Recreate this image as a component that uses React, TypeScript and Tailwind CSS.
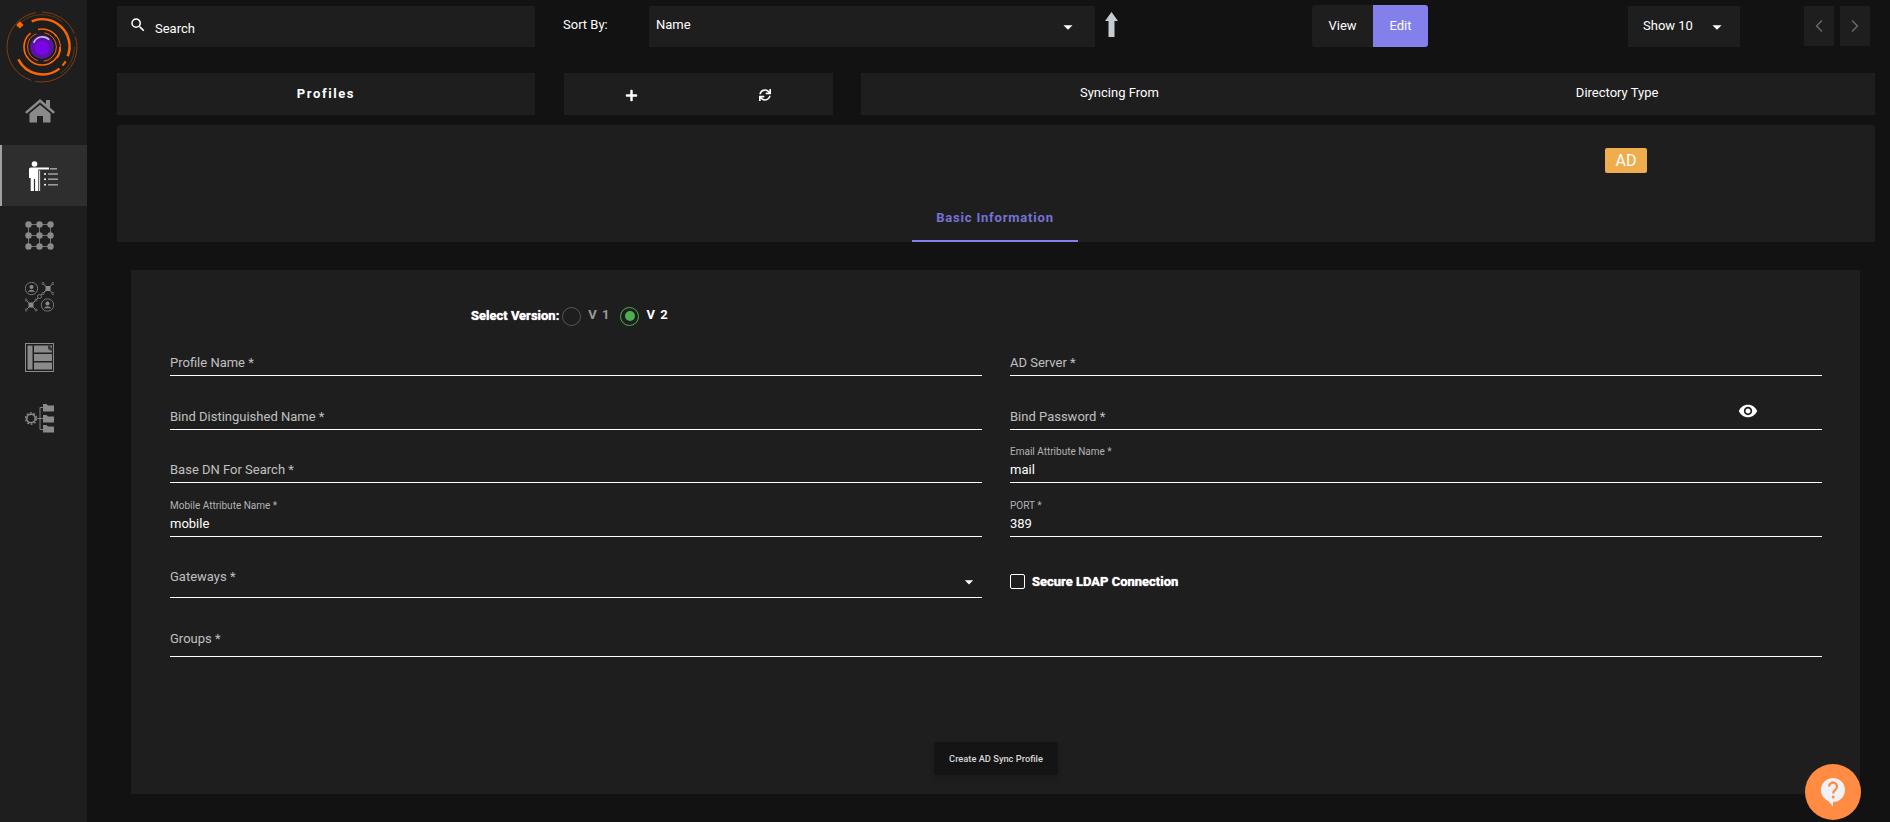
import React from "react";
import { MdSearch, MdArrowDropDown, MdVisibility } from "react-icons/md";
import { FaPlus, FaSync } from "react-icons/fa";
import { FiChevronLeft, FiChevronRight } from "react-icons/fi";

const Logo = () => (
  <svg viewBox="0 0 70 70" className="w-[72px] h-[72px]" fill="none" stroke="#ff6600">
    <circle cx="35" cy="35" r="34" strokeWidth="0.6" strokeDasharray="60 4 90 6 40 3" opacity="0.7" />
    <circle cx="35" cy="35" r="31.5" strokeWidth="0.5" strokeDasharray="30 90 50 30" opacity="0.6" />
    <path d="M25 10 A26.5 26.5 0 0 1 60 44" strokeWidth="2.4" />
    <path d="M52 56 A26.5 26.5 0 0 1 12 47" strokeWidth="2.4" />
    <path d="M58 49 A26.5 26.5 0 0 1 55 53" strokeWidth="2" />
    <circle cx="35" cy="35" r="17.5" strokeWidth="1.6" strokeDasharray="70 8 20 12" />
    <circle cx="35" cy="35" r="14" strokeWidth="0.9" strokeDasharray="20 6 34 8" />
    <path d="M47 22 A19 19 0 0 1 50 46" strokeWidth="1" />
    <rect x="11" y="11" width="5" height="5" fill="#ff6600" stroke="none" transform="rotate(45 13.5 13.5)" />
    <circle cx="35" cy="35" r="11.5" fill="#5a12a8" stroke="none" />
    <circle cx="35" cy="36" r="7" fill="#7a06e8" stroke="none" />
    <path d="M27 31 A9 9 0 0 1 42 28" stroke="#c9b8e8" strokeWidth="1.6" />
  </svg>
);

const HomeIcon = () => (
  <svg viewBox="0 0 30 26" className="w-[30px] h-[26px] -mt-1" fill="#8a8a8a">
    <path d="M15 0 L21 5 V1 H25 V8.5 L30 13 L28.4 14.8 L15 3.6 L1.6 14.8 L0 13 Z" />
    <path d="M4.5 14.5 L15 5.8 L25.5 14.5 V23.5 H18 V17 H12 V23.5 H4.5 Z" />
  </svg>
);

const PersonIcon = () => (
  <svg viewBox="0 0 30 30" className="w-[30px] h-[30px]">
    <g fill="#ffffff">
      <circle cx="5.5" cy="3" r="2.8" />
      <path d="M0 8 Q0 6.5 2 6.5 H20 V8.6 H9.3 V30 H6.1 V18 H4.9 V30 H1.7 V17 H0 Z" />
      <rect x="10.2" y="9.5" width="0.9" height="20.5" />
    </g>
    <g fill="#9a9a9a">
      <rect x="21" y="7" width="7" height="1.6" />
      <rect x="19" y="12.2" width="10" height="1.6" />
      <rect x="19" y="17.4" width="10" height="1.6" />
      <rect x="19" y="23" width="10" height="1.6" />
    </g>
    <g fill="#ffffff">
      <circle cx="16" cy="13" r="1" />
      <circle cx="16" cy="18.2" r="1" />
      <circle cx="16" cy="23.8" r="1" />
    </g>
  </svg>
);

const GridIcon = () => {
  const spots = [3.5, 14.5, 25.5];
  return (
    <svg viewBox="0 0 29 29" className="w-[29px] h-[29px]" fill="#8a8a8a" stroke="#8a8a8a">
      {spots.map((y) => (
        <line key={`h${y}`} x1="3.5" x2="25.5" y1={y} y2={y} strokeWidth="0.8" />
      ))}
      {spots.map((x) => (
        <line key={`v${x}`} y1="3.5" y2="25.5" x1={x} x2={x} strokeWidth="0.8" />
      ))}
      {spots.flatMap((y) =>
        spots.map((x) => <circle key={`${x}-${y}`} cx={x} cy={y} r="3.2" stroke="none" />)
      )}
    </svg>
  );
};

const NetNode = ({ x, y }: { x: number; y: number }) => (
  <g>
    <path
      d={`M${x - 5} ${y - 5} L${x + 5} ${y + 5} M${x + 5} ${y - 5} L${x - 5} ${y + 5}`}
      stroke="#8a8a8a"
      strokeWidth="0.9"
    />
    <rect x={x - 2.5} y={y - 2.5} width="5" height="5" fill="#8a8a8a" />
    <circle cx={x - 5} cy={y - 5} r="1.1" fill="#1e1e1e" stroke="#8a8a8a" strokeWidth="0.7" />
    <circle cx={x + 5} cy={y - 5} r="1.1" fill="#1e1e1e" stroke="#8a8a8a" strokeWidth="0.7" />
    <circle cx={x - 5} cy={y + 5} r="1.1" fill="#1e1e1e" stroke="#8a8a8a" strokeWidth="0.7" />
    <circle cx={x + 5} cy={y + 5} r="1.1" fill="#1e1e1e" stroke="#8a8a8a" strokeWidth="0.7" />
  </g>
);

const UserCircle = ({ x, y }: { x: number; y: number }) => (
  <g>
    <circle cx={x} cy={y} r="6.2" fill="none" stroke="#8a8a8a" strokeWidth="0.8" />
    <circle cx={x} cy={y - 1.6} r="2" fill="#8a8a8a" />
    <path d={`M${x - 3.8} ${y + 3.2} Q${x} ${y - 0.6} ${x + 3.8} ${y + 3.2} Z`} fill="#8a8a8a" />
  </g>
);

const NodesIcon = () => (
  <svg viewBox="0 0 29 30" className="w-[29px] h-[30px]">
    <line x1="6" y1="23" x2="23" y2="6" stroke="#8a8a8a" strokeWidth="0.8" />
    <UserCircle x={6.5} y={6.5} />
    <NetNode x={23} y={6.5} />
    <NetNode x={6} y={23} />
    <UserCircle x={22.5} y={23} />
    <circle cx="14.5" cy="14.5" r="2" fill="#1e1e1e" stroke="#8a8a8a" strokeWidth="0.8" />
  </svg>
);

const ListIcon = () => (
  <svg viewBox="0 0 29 29" className="w-[29px] h-[29px]">
    <rect x="0.5" y="0.5" width="28" height="28" fill="none" stroke="#8a8a8a" />
    <rect x="2.5" y="2.5" width="5" height="24" fill="#8a8a8a" />
    <rect x="9" y="2.5" width="18" height="7" fill="#8a8a8a" />
    <rect x="9" y="11" width="18" height="7" fill="#8a8a8a" />
    <rect x="9" y="19.5" width="18" height="7" fill="#8a8a8a" />
    <path d="M23 1 L28 6 L26 8 L23 6 Z" fill="#3a3a3a" />
  </svg>
);

const FlowIcon = () => (
  <svg viewBox="0 0 29 30" className="w-[29px] h-[30px]" fill="#8a8a8a">
    <circle cx="6" cy="14.5" r="4.2" fill="none" stroke="#8a8a8a" strokeWidth="1.6" />
    <circle cx="6" cy="14.5" r="5.6" fill="none" stroke="#8a8a8a" strokeWidth="1.2" strokeDasharray="2 1.5" />
    <path d="M12 14.5 H15 M15 3.5 V25.5 H18 M15 3.5 H18 M15 14.5 H18" fill="none" stroke="#8a8a8a" strokeWidth="0.9" />
    <path d="M18 0 H21.5 L23 1.5 H29 V7.5 H18 Z" />
    <path d="M18 11 H21.5 L23 12.5 H29 V18.5 H18 Z" />
    <path d="M18 21 H21.5 L23 22.5 H29 V28.5 H18 Z" />
  </svg>
);

const HelpBubble = () => (
  <svg viewBox="0 0 26 30" className="w-[26px] h-[30px]">
    <path
      d="M13 1 A12 12 0 1 1 13 25 L13 29.5 L8.6 24.2 A12 12 0 0 1 13 1 Z"
      fill="#f0f2f7"
    />
    <path
      d="M9 9.5 A4 4 0 1 1 15.6 12.6 C14 13.9 13.2 14.4 13.2 16.4"
      fill="none"
      stroke="#ff8c42"
      strokeWidth="2.3"
    />
    <circle cx="13.2" cy="20" r="1.5" fill="#ff8c42" />
  </svg>
);

const Caret = () => <MdArrowDropDown className="text-white text-[22px]" />;

const navItems = [
  { icon: <HomeIcon /> },
  { icon: <PersonIcon />, active: true },
  { icon: <GridIcon /> },
  { icon: <NodesIcon /> },
  { icon: <ListIcon /> },
  { icon: <FlowIcon /> },
];

const Sidebar = () => (
  <aside className="w-[87px] shrink-0 bg-[#1e1e1e]">
    <div className="h-[84px] pt-[11px] pl-[6px]">
      <Logo />
    </div>
    {navItems.map((item, i) => (
      <div
        key={i}
        className={
          item.active
            ? "h-[61px] flex items-center justify-center pr-[2px] bg-[#2e2e2e] border-l-2 border-[#a0a0a0]"
            : "h-[61px] flex items-center justify-center pr-[8px] pb-[2px]"
        }
      >
        {item.icon}
      </div>
    ))}
  </aside>
);

interface FieldProps {
  label: string;
  value?: string;
  className: string;
  children?: React.ReactNode;
}

const Field = ({ label, value, className, children }: FieldProps) => (
  <div className={`relative flex flex-col justify-end border-b border-white ${className}`}>
    {value ? (
      <div className="pb-[2px]">
        <div className="text-[10px] leading-[14px] mb-[1px] text-[#b3b3b3]">{label}</div>
        <div className="text-[13px] leading-[20px] text-white">{value}</div>
      </div>
    ) : (
      <span className="text-[13px] leading-[20px] text-[#c0c0c0]">{label}</span>
    )}
    {children}
  </div>
);

const Radio = ({ label, checked }: { label: string; checked?: boolean }) => (
  <div className="flex items-center gap-[7px]">
    <span
      className={
        checked
          ? "w-[19px] h-[19px] rounded-full border border-[#4caf50] flex items-center justify-center"
          : "w-[19px] h-[19px] rounded-full border border-[#555555] flex items-center justify-center"
      }
    >
      {checked && <span className="w-[10px] h-[10px] rounded-full bg-[#4caf50]" />}
    </span>
    <span
      className={
        checked
          ? "text-[13px] font-bold tracking-[1px] text-white -mt-[2px]"
          : "text-[13px] font-bold tracking-[1px] text-[#9a9a9a] -mt-[2px]"
      }
    >
      {label}
    </span>
  </div>
);

export default function App() {
  return (
    <div className="w-full h-screen flex overflow-hidden bg-[#121212] font-['Roboto',sans-serif]">
      <Sidebar />

      <main className="flex-1 pl-[30px] pr-[15px]">
        {/* top toolbar */}
        <div className="flex items-start h-[41px] mt-[6px] text-white text-[13px]">
          <div className="w-[418px] h-[41px] bg-[#1e1e1e] flex items-center pl-3">
            <MdSearch className="text-[18px] -mt-1" />
            <span className="ml-[8px] mt-[5px]">Search</span>
          </div>
          <span className="ml-[28px] w-[86px] h-[37px] flex items-center text-[13px]">Sort By:</span>
          <div className="w-[446px] h-[41px] bg-[#1e1e1e] flex items-center justify-between pl-[7px] pr-[16px]">
            <span className="-mt-[3px]">Name</span>
            <Caret />
          </div>
          <svg viewBox="0 0 13 25" className="w-[13px] h-[25px] ml-[10px] mt-[6px]" fill="#c5cdd3">
            <path d="M6.5 0 L13 9 H9.5 V25 H3.5 V9 H0 Z" />
          </svg>
          <div className="ml-[194px] flex h-[42px] -mt-[1px] rounded-[3px] overflow-hidden bg-[#1e1e1e]">
            <span className="w-[61px] flex items-center justify-center">View</span>
            <span className="w-[55px] flex items-center justify-center bg-[#8380ec]">Edit</span>
          </div>
          <div className="ml-[200px] w-[112px] h-[41px] bg-[#1e1e1e] flex items-center pl-[15px]">
            <span className="-mt-[1px]">Show 10</span>
            <MdArrowDropDown className="text-white text-[22px] ml-[13px]" />
          </div>
          <div className="ml-[64px] w-[30px] h-[40px] bg-[#1e1e1e] flex items-center justify-center text-[#666666]">
            <FiChevronLeft className="text-[20px]" />
          </div>
          <div className="ml-[6px] w-[30px] h-[40px] bg-[#1e1e1e] flex items-center justify-center text-[#666666]">
            <FiChevronRight className="text-[20px]" />
          </div>
        </div>

        {/* header row */}
        <div className="flex h-[42px] mt-[26px] text-white text-[13px]">
          <div className="w-[418px] bg-[#1e1e1e] flex items-center justify-center font-bold tracking-[1.6px]">
            Profiles
          </div>
          <div className="ml-[29px] w-[269px] bg-[#1e1e1e] flex items-center pl-[61px]">
            <FaPlus className="text-[13px] mt-[2px]" />
            <FaSync className="text-[12px] ml-[121px] mt-[1px]" />
          </div>
          <div className="ml-[28px] flex-1 bg-[#1e1e1e] flex items-center pb-[2px]">
            <span className="ml-[219px]">Syncing From</span>
            <span className="ml-[417px]">Directory Type</span>
          </div>
        </div>

        {/* profile card with tab */}
        <div className="mt-[10px] h-[117px] rounded-t-[4px] bg-[#1e1e1e] flex flex-col">
          <div className="flex justify-end pr-[228px] pt-[23px]">
            <span className="w-[42px] h-[25px] rounded-[2px] bg-[#f0ad4e] flex items-center justify-center text-white text-[16px]">
              AD
            </span>
          </div>
          <div className="flex justify-center mt-auto pr-[2px]">
            <span className="w-[166px] h-[44px] flex items-center justify-center pb-[2px] border-b-2 border-[#8380ec] text-[#7672d6] text-[13px] font-bold tracking-[0.8px]">
              Basic Information
            </span>
          </div>
        </div>

        {/* form */}
        <div className="mt-[28px] ml-[14px] w-[1729px] h-[524px] bg-[#1e1e1e] pl-[39px] pr-[38px] pt-[36px]">
          <div className="flex items-center h-[20px] pl-[301px]">
            <span className="text-[13px] font-bold text-white mr-[3px] [text-shadow:0_0_1px_#ffffff]">Select Version:</span>
            <Radio label="V 1" />
            <span className="w-[10px]" />
            <Radio label="V 2" checked />
          </div>

          <div className="grid grid-cols-2 gap-x-[28px]">
            <Field label="Profile Name *" className="h-[50px] pb-[2px]" />
            <Field label="AD Server *" className="h-[50px] pb-[2px]" />
            <Field label="Bind Distinguished Name *" className="h-[54px] pb-[2px]" />
            <Field label="Bind Password *" className="h-[54px] pb-[2px]">
              <MdVisibility className="absolute right-[64px] top-[25px] text-white text-[20px]" />
            </Field>
            <Field label="Base DN For Search *" className="h-[53px] pb-[2px]" />
            <Field label="Email Attribute Name *" value="mail" className="h-[53px]" />
            <Field label="Mobile Attribute Name *" value="mobile" className="h-[54px]" />
            <Field label="PORT *" value="389" className="h-[54px]" />
            <Field label="Gateways *" className="h-[61px] pb-[10px]">
              <MdArrowDropDown className="absolute right-[3px] top-[35px] text-white text-[20px]" />
            </Field>
            <div className="h-[61px] flex items-start pt-[37px]">
              <span className="w-[15px] h-[15px] rounded-[2px] border border-white" />
              <span className="ml-[7px] -mt-[2px] text-[13px] font-bold text-white leading-[19px] [text-shadow:0_0_1px_#ffffff]">
                Secure LDAP Connection
              </span>
            </div>
            <Field label="Groups *" className="col-span-2 h-[59px] pb-[7px]" />
          </div>

          <div className="flex justify-center mt-[85px]">
            <button className="w-[124px] h-[33px] rounded-[3px] bg-[#141414] shadow-md text-[#d8d8d8] text-[9.3px] font-medium">
              Create AD Sync Profile
            </button>
          </div>
        </div>
      </main>

      <div className="fixed left-[1805px] top-[764px] w-[56px] h-[56px] rounded-full bg-[#ff8c42] flex items-center justify-center">
        <HelpBubble />
      </div>
    </div>
  );
}
